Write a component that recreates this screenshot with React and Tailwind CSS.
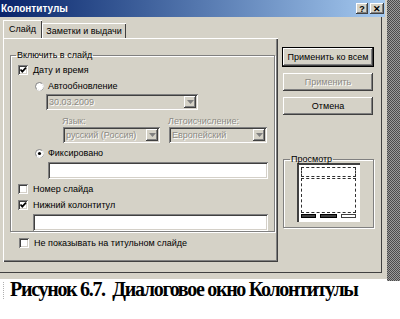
import React from 'react'

const raised = 'shadow-[inset_-1px_-1px_#404040,inset_1px_1px_#ffffff,inset_-2px_-2px_#808080]'
const sunken = 'shadow-[inset_1px_1px_#808080,inset_-1px_-1px_#ffffff,inset_2px_2px_#404040,inset_-2px_-2px_#d4d0c8]'

function Check({ checked }) {
  return (
    <span className={`flex w-[10px] h-[10px] shrink-0 bg-white ${sunken}`}>
      {checked && (
        <svg width="10" height="10" viewBox="0 0 10 10">
          <path d="M2.5 4.5 L4.3 6.6 L8 2.6" stroke="#000" strokeWidth="1.7" fill="none" />
        </svg>
      )}
    </span>
  )
}

function Radio({ on }) {
  return (
    <svg width="9" height="9" viewBox="0 0 9 9" className="shrink-0">
      <circle cx="4.5" cy="4.5" r="4" fill="#fff" stroke="#808080" strokeWidth="1" />
      <path d="M7.3 1.7 A4 4 0 0 1 1.7 7.3" stroke="#fff" strokeWidth="1.2" fill="none" />
      {on && <circle cx="4.5" cy="4.5" r="1.6" fill="#000" />}
    </svg>
  )
}

function Combo({ text, className }) {
  return (
    <div className={`flex h-[16px] p-[2px] bg-[#d5d2c7] ${sunken} ${className}`}>
      <span className="flex-1 pl-[1px] leading-[12px] text-[#8c8a84] [text-shadow:1px_1px_#fff] truncate">{text}</span>
      <span className={`flex w-[12px] items-center justify-center bg-[#d5d2c7] ${raised}`}>
        <svg width="7" height="4" viewBox="0 0 7 4">
          <path d="M0 0 H7 L3.5 4 Z" fill="#808080" />
        </svg>
      </span>
    </div>
  )
}

function Field({ className }) {
  return <div className={`h-[17px] bg-white ${sunken} ${className}`} />
}

function Button({ children, disabled, primary }) {
  return (
    <div
      className={`flex h-[18px] w-[90px] items-center justify-center bg-[#d5d2c7] ${raised} ${
        primary ? 'outline outline-1 outline-black' : ''
      } ${disabled ? 'text-[#8c8a84] [text-shadow:1px_1px_#fff]' : 'text-black'}`}
    >
      {children}
    </div>
  )
}

export default function App() {
  return (
    <div className="w-[400px] h-[319px] bg-white overflow-hidden font-['Liberation_Sans',Arial,sans-serif] text-[9px] leading-[12px] text-black">
      <div className="flex">
        {/* dialog */}
        <div className="w-[387px] h-[279px] bg-[#d5d2c7] flex flex-col">
          <div className="h-[17px] w-[385px] flex items-center bg-gradient-to-r from-[#0a246a] to-[#a6caf0] pl-[1px] pr-[1px]">
            <span className="flex-1 text-white font-bold text-[10px]">Колонтитулы</span>
            <span className={`flex w-[12px] h-[11px] items-center justify-center bg-[#d5d2c7] font-bold text-[9px] ${raised}`}>?</span>
            <span className={`ml-[2px] flex w-[14px] h-[11px] items-center justify-center bg-[#d5d2c7] font-bold text-[9px] ${raised}`}>✕</span>
          </div>

          <div className="w-[382px] h-[256px] border-r border-b border-[#404040] flex pl-[3px] pt-[3px]">
            {/* tabs */}
            <div className="w-[275px] flex flex-col">
              <div className="flex items-end h-[18px]">
                <div className="h-[18px] w-[39px] flex items-center justify-center shadow-[inset_1px_1px_#ffffff,inset_-1px_0_#404040] bg-[#d5d2c7] relative z-10">
                  Слайд
                </div>
                <div className="h-[15px] w-[84px] flex items-center justify-center shadow-[inset_1px_1px_#ffffff,inset_-1px_0_#404040]">
                  Заметки и выдачи
                </div>
              </div>
              <div className="h-[224px] shadow-[inset_1px_1px_#ffffff,inset_-1px_-1px_#404040,inset_-2px_-2px_#808080] pl-[7px] pt-[11px]">
                <fieldset className="w-[265px] h-[183px] border border-[#808080] shadow-[1px_1px_#ffffff,inset_1px_1px_#ffffff] px-0 pb-0">
                  <legend className="ml-[5px] px-[1px] leading-[12px]">Включить в слайд</legend>
                  <div className="flex flex-col">
                    <div className="mt-[3px] flex items-center gap-[5px] pl-[7px]">
                      <Check checked />
                      <span>Дату и время</span>
                    </div>
                    <div className="mt-[4px] flex items-center gap-[4px] pl-[24px]">
                      <Radio />
                      <span>Автообновление</span>
                    </div>
                    <Combo text="30.03.2009" className="mt-[2px] ml-[35px] w-[152px]" />
                    <div className="mt-[6px] flex text-[#8c8a84] [text-shadow:1px_1px_#fff] h-[11px] leading-[11px]">
                      <span className="ml-[51px] w-[106px]">Язык:</span>
                      <span>Летоисчисление:</span>
                    </div>
                    <div className="flex">
                      <Combo text="русский (Россия)" className="ml-[52px] w-[97px]" />
                      <Combo text="Европейский" className="ml-[9px] w-[98px]" />
                    </div>
                    <div className="mt-[4px] flex items-center gap-[4px] pl-[24px]">
                      <Radio on />
                      <span>Фиксировано</span>
                    </div>
                    <Field className="mt-[3px] ml-[37px] w-[220px]" />
                    <div className="mt-[4px] flex items-center gap-[5px] pl-[7px]">
                      <Check />
                      <span>Номер слайда</span>
                    </div>
                    <div className="mt-[4px] flex items-center gap-[5px] pl-[7px]">
                      <Check checked />
                      <span>Нижний колонтитул</span>
                    </div>
                    <Field className="mt-[3px] ml-[22px] w-[235px]" />
                  </div>
                </fieldset>
                <div className="mt-[5px] flex items-center gap-[5px] pl-[9px]">
                  <Check />
                  <span>Не показывать на титульном слайде</span>
                </div>
              </div>
            </div>

            {/* buttons */}
            <div className="ml-[5px] pt-[28px] flex flex-col w-[91px]">
              <Button primary>Применить ко всем</Button>
              <div className="mt-[7px]">
                <Button disabled>Применить</Button>
              </div>
              <div className="mt-[6px]">
                <Button>Отмена</Button>
              </div>
              <fieldset className="mt-[38px] w-[91px] h-[75px] border border-[#808080] shadow-[1px_1px_#ffffff,inset_1px_1px_#ffffff] px-0 pb-0">
                <legend className="ml-[6px] px-[1px] leading-[12px]">Просмотр</legend>
                <div className="ml-[13px] mt-[-2px] w-[63px] h-[59px] bg-white shadow-[inset_2px_2px_#404040] p-[4px] pl-[4px] flex flex-col">
                  <div className="h-[10px] border border-dashed border-[#303030]" />
                  <div className="flex-1 mt-[1px] border border-dashed border-[#303030]" />
                  <div className="flex gap-[4px] mt-[1px]">
                    <span className="w-[15px] h-[4px] bg-[#404040] border border-[#000]" />
                    <span className="w-[18px] h-[4px] bg-[#404040] border border-[#000]" />
                    <span className="w-[15px] h-[4px] bg-white border border-[#404040]" />
                  </div>
                </div>
              </fieldset>
            </div>
          </div>
        </div>
        {/* window shadow strip */}
        <div className="w-[13px] h-[281px] bg-[repeating-conic-gradient(#4a4a4a_0_25%,#9a9a9a_0_50%)] bg-size-[2px_2px]" />
      </div>
      <div className="flex mt-[-3px]">
        <span className="ml-[3px] mt-[4px] w-[1px] h-[17px] border-l border-dotted border-[#b0b0b0]" />
        <span className="ml-[6px] font-['Liberation_Serif','Times_New_Roman',serif] font-bold text-[20px] leading-[22px] tracking-[-1.3px]">
          Рисунок 6.7.&nbsp; Диалоговое окно Колонтитулы
        </span>
      </div>
    </div>
  )
}
